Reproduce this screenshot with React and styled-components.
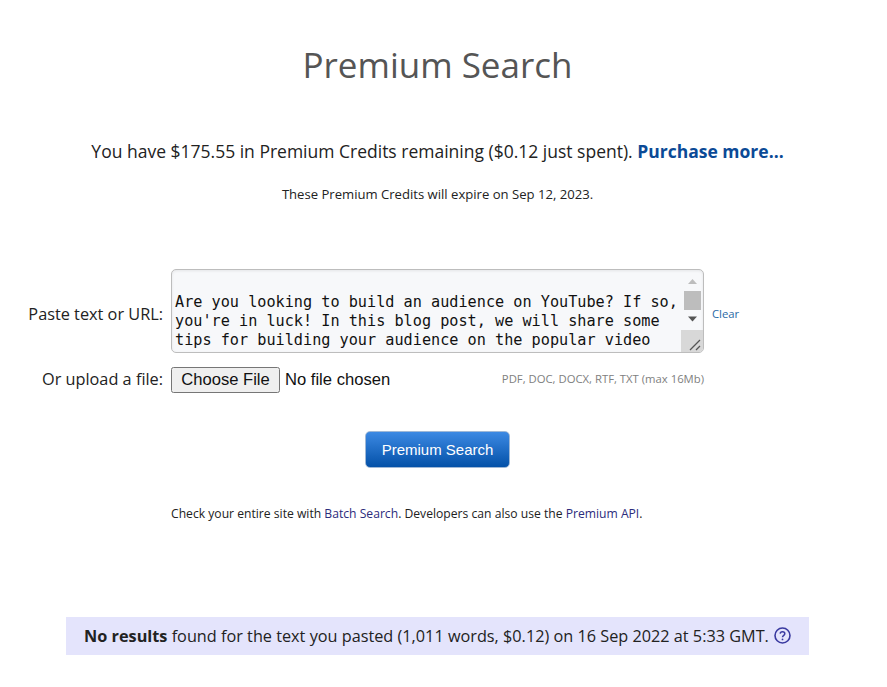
import React from "react";
import styled, { createGlobalStyle } from "styled-components";

const Global = createGlobalStyle`
  html, body { margin: 0; padding: 0; background: #fff; }
  body { font-family: "Open Sans", "Liberation Sans", sans-serif; color: #222; }
`;
const Page = styled.div`
  width: 875px; height: 687px; overflow: hidden;
  display: flex; flex-direction: column; align-items: center;
`;
const Title = styled.h1`
  margin: 40px 0 0; font-size: 35px; line-height: 49px; font-weight: 400; color: #555;
`;
const Credits = styled.p`
  margin: 50px 0 0; font-size: 17.5px; line-height: 24px; color: #222;
`;
const Purchase = styled.a`
  color: #0b4a96; font-weight: 700;
`;
const Expire = styled.p`
  margin: 23px 0 0; font-size: 13.1px; line-height: 16px; color: #222;
`;
const Form = styled.div`
  align-self: flex-start; margin: 67px 0 0;
  display: grid; grid-template-columns: 163px 533px auto; column-gap: 8px; row-gap: 14px;
  align-items: center;
`;
const Label = styled.label`
  font-size: 16.3px; line-height: 22px; text-align: right; color: #222;
  padding-top: ${(p) => p.$top}px; padding-bottom: ${(p) => p.$bottom}px;
`;
const TextBox = styled.div`
  box-sizing: border-box; width: 533px; height: 84px; display: flex; overflow: hidden;
  border: 1px solid #bdbdbd; border-radius: 5px; background: #f7f8fa;
  box-shadow: inset 0 1px 3px rgba(0,0,0,.08);
`;
const TextBody = styled.div`
  flex: 1; display: flex; flex-direction: column; justify-content: flex-end;
  padding: 0 0 2px 3px;
  font-family: "DejaVu Sans Mono", "Liberation Mono", monospace; font-size: 15.2px; line-height: 19px;
  color: #111; white-space: pre;
`;
const Scroll = styled.div`
  width: 22px; flex: none; display: flex; flex-direction: column;
`;
const ScrollZone = styled.div`
  height: 60px; padding-left: 3px; display: flex; flex-direction: column; flex: none;
`;
const Arrow = styled.svg`
  width: 17px; height: 20px; display: block; flex: none;
`;
const Grip = styled.svg`
  width: 22px; height: 22px; display: block;
`;
const Thumb = styled.div`
  width: 17px; height: 19px; background: #bdbdbd; flex: none; margin-top: 1px;
`;
const Corner = styled.div`
  flex: 1; background: #d8d8d8;
`;
const ClearLink = styled.a`
  font-size: 11.3px; line-height: 14px; padding-top: 5px; color: #2a6aa5;
`;
const FileRow = styled.div`
  display: flex; align-items: center; justify-content: space-between;
`;
const FileInput = styled.input`
  font-family: "Liberation Sans", Arial, sans-serif; font-size: 16.6px; color: #111; width: 280px;
  &::file-selector-button {
    box-sizing: border-box; height: 26px; width: 109px; margin-right: 5px; padding: 0;
    font: inherit; color: #111;
  }
`;
const Hint = styled.span`
  font-size: 11.3px; line-height: 14px; padding-bottom: 2px; color: #808080;
`;
const SubmitRow = styled.div`
  margin-top: 38px; display: flex; justify-content: center;
`;
const Submit = styled.button`
  box-sizing: border-box; width: 145px; height: 37px; border-radius: 5px;
  border: 1px solid #9fb8d6; color: #fff;
  background: linear-gradient(#3c89e3, #0451a8);
  font-family: "Liberation Sans", Arial, sans-serif; font-size: 15px; padding: 0;
`;
const Note = styled.p`
  margin: 38px 0 0; align-self: flex-start; padding-left: 171px;
  font-size: 12.15px; line-height: 15px; color: #222;
`;
const NoteLink = styled.a`
  color: #2c2c7c;
`;
const Result = styled.div`
  margin-top: 96px; align-self: flex-start; margin-left: 66px; width: 743px; height: 38px;
  background: #e4e4fc; display: flex; align-items: center; justify-content: center; gap: 5px;
  font-size: 16.25px; color: #222;
`;
const Help = styled.svg`
  width: 17px; height: 17px; display: block; margin-top: -2px;
`;

export default function App() {
  return (
    <Page>
      <Global />
      <Title>Premium Search</Title>
      <Credits>
        You have $175.55 in Premium Credits remaining ($0.12 just spent). <Purchase>Purchase more...</Purchase>
      </Credits>
      <Expire>These Premium Credits will expire on Sep 12, 2023.</Expire>
      <Form>
        <Label $top={6} $bottom={0}>Paste text or URL:</Label>
        <TextBox>
          <TextBody>
            <div>Are you looking to build an audience on YouTube? If so,</div>
            <div>you're in luck! In this blog post, we will share some</div>
            <div>tips for building your audience on the popular video</div>
          </TextBody>
          <Scroll>
            <ScrollZone>
              <Arrow viewBox="0 0 17 20"><path d="M4 14 L8.5 9 L13 14Z" fill="#bdbdbd" /></Arrow>
              <Thumb />
              <Arrow viewBox="0 0 17 20"><path d="M4 6.5 L13 6.5 L8.5 11.5Z" fill="#555" /></Arrow>
            </ScrollZone>
            <Corner>
              <Grip viewBox="0 0 22 22">
                <path d="M9 20 L19 10 M15 20 L19 16" stroke="#555" strokeWidth="1.3" fill="none" />
              </Grip>
            </Corner>
          </Scroll>
        </TextBox>
        <ClearLink>Clear</ClearLink>
        <Label $top={0} $bottom={2}>Or upload a file:</Label>
        <FileRow>
          <FileInput type="file" />
          <Hint>PDF, DOC, DOCX, RTF, TXT (max 16Mb)</Hint>
        </FileRow>
      </Form>
      <SubmitRow>
        <Submit>Premium Search</Submit>
      </SubmitRow>
      <Note>
        Check your entire site with <NoteLink>Batch Search</NoteLink>. Developers can also use the <NoteLink>Premium API</NoteLink>.
      </Note>
      <Result>
        <span><b>No results</b> found for the text you pasted (1,011 words, $0.12) on 16 Sep 2022 at 5:33 GMT.</span>
        <Help viewBox="0 0 17 17">
          <circle cx="8.5" cy="8.5" r="7.5" fill="none" stroke="#3a3aa0" strokeWidth="1.6" />
          <path d="M6.2 6.6 C6.3 4.2 10.8 4.2 10.8 6.7 C10.8 8.4 8.5 8.3 8.5 10.2" fill="none" stroke="#3a3aa0" strokeWidth="1.5" />
          <circle cx="8.5" cy="12.4" r="0.9" fill="#3a3aa0" />
        </Help>
      </Result>
    </Page>
  );
}
